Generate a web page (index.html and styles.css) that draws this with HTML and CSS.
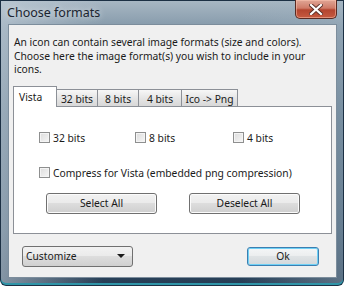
FILE: index.html
```html
<!DOCTYPE html>
<html lang="en">
<head>
    <meta charset="UTF-8">
    <meta name="viewport" content="width=device-width, initial-scale=1.0">
    <title>Choose formats</title>
    <link rel="stylesheet" href="styles.css">
</head>
<body>

    <div class="window">
        <!-- Title bar -->
        <div class="title-bar">
            <span class="title">Choose formats</span>
            <button class="close-btn" aria-label="Close">
                <svg width="14" height="11" viewBox="0 0 14 11">
                    <path d="M2 1 L12 10 M12 1 L2 10" stroke="#5a3028" stroke-width="4" stroke-linecap="square"/>
                    <path d="M2 1 L12 10 M12 1 L2 10" stroke="#ffffff" stroke-width="2.2" stroke-linecap="square"/>
                </svg>
            </button>
        </div>

        <div class="client">
            <p class="intro">An icon can contain several image formats (size and colors). Choose here the image format(s) you wish to include in your icons.</p>

            <!-- Tabs -->
            <div class="tabs">
                <div class="tab active">Vista</div>
                <div class="tab">32 bits</div>
                <div class="tab">8 bits</div>
                <div class="tab wide">4 bits</div>
                <div class="tab widest">Ico -&gt; Png</div>
            </div>

            <div class="tab-panel">
                <div class="check-row">
                    <label class="check col-1"><span class="box"></span>32 bits</label>
                    <label class="check col-2"><span class="box"></span>8 bits</label>
                    <label class="check"><span class="box"></span>4 bits</label>
                </div>
                <div class="check-row second">
                    <label class="check"><span class="box"></span>Compress for Vista (embedded png compression)</label>
                </div>
                <div class="panel-buttons">
                    <button class="btn">Select All</button>
                    <button class="btn">Deselect All</button>
                </div>
            </div>

            <!-- Bottom row -->
            <div class="footer">
                <div class="combo">
                    <span>Customize</span>
                    <span class="arrow"></span>
                </div>
                <button class="btn ok">Ok</button>
            </div>
        </div>
    </div>

</body>
</html>
```

FILE: styles.css
```css
/* General Styling */
body {
    margin: 0;
    background: #ffffff;
    font-family: 'Noto Sans', 'Open Sans', sans-serif;
    font-size: 10.3px;
    color: #1a1a1a;
}

/* Window frame */
.window {
    width: 344px;
    height: 286px;
    box-sizing: border-box;
    padding: 0 7px 8px 8px;
    border-radius: 0 0 6px 6px;
    background:
        linear-gradient(to right, rgba(196, 208, 218, 0.6), rgba(60, 90, 112, 0) 30%, rgba(60, 90, 112, 0) 70%, rgba(160, 178, 192, 0.45)),
        linear-gradient(to bottom, #a9b8c4 0%, #8398a9 10%, #5a7489 40%, #3b566e 80%, #243c54 100%);
    box-shadow: inset 0 0 0 1px #1c3044, inset 0 -2px 0 1px #2f95a8;
}

.title-bar {
    height: 24px;
    display: flex;
    justify-content: space-between;
    align-items: flex-start;
}

.title {
    margin-top: 4px;
    margin-left: -1px;
    font-size: 12.5px;
    color: #1b2530;
    text-shadow: 0 0 6px rgba(255, 255, 255, 0.8);
}

.close-btn {
    width: 42px;
    height: 19px;
    padding: 0;
    border: 1px solid #5a2a22;
    border-top: none;
    border-radius: 0 0 5px 5px;
    background: linear-gradient(to bottom, #e0a696 0%, #cf7b68 45%, #b4452f 55%, #c65a40 100%);
    box-shadow: inset 0 0 0 1px rgba(255, 200, 180, 0.5);
    display: flex;
    justify-content: center;
    align-items: center;
}

/* Client area */
.client {
    height: 254px;
    box-sizing: border-box;
    background: #f0f0f0;
    border: 1px solid #7c8d9c;
    padding: 0 4px 0 4px;
    display: flex;
    flex-direction: column;
}

.intro {
    margin: 11px 0 0 1px;
    line-height: 13.5px;
    width: 310px;
}

/* Tabs */
.tabs {
    display: flex;
    align-items: flex-end;
    margin-top: 9px;
    height: 20px;
    position: relative;
    z-index: 1;
}

.tab {
    width: 42px;
    height: 17px;
    box-sizing: border-box;
    padding: 2px 0 0 0;
    text-align: center;
    border: 1px solid #8c9097;
    border-bottom: none;
    margin-right: -1px;
    background: linear-gradient(to bottom, #f7f7f7, #e4e4e4 55%, #d8d8d8);
}

.tab.wide {
    width: 44px;
}

.tab.widest {
    width: 57px;
}

.tab.active {
    width: 44px;
    height: 21px;
    margin-bottom: -1px;
    padding: 3px 6px 0 5px;
    text-align: left;
    background: #ffffff;
}

.tab-panel {
    height: 128px;
    box-sizing: border-box;
    background: #ffffff;
    border: 1px solid #8c9097;
    padding: 24px 0 0 25px;
}

.check-row {
    display: flex;
}

.check-row.second {
    margin-top: 21px;
}

.check {
    display: flex;
    align-items: center;
    gap: 3px;
}

.col-1 {
    width: 96px;
}

.col-2 {
    width: 98px;
}

.box {
    width: 11px;
    height: 11px;
    box-sizing: border-box;
    border: 1px solid #8e8f8f;
    background: linear-gradient(135deg, #dcdcdc, #f6f6f6);
    box-shadow: inset 0 0 0 1px #f4f4f4;
}

.panel-buttons {
    display: flex;
    gap: 32px;
    margin: 13px 0 0 7px;
}

/* Buttons */
.btn {
    width: 111px;
    height: 21px;
    padding: 0;
    font-family: inherit;
    font-size: 10.3px;
    color: #1a1a1a;
    border: 1px solid #707070;
    border-radius: 3px;
    background: linear-gradient(to bottom, #f2f2f2 0%, #ebebeb 45%, #dddddd 50%, #cfcfcf 100%);
    box-shadow: inset 0 0 0 1px #fbfbfb;
}

/* Footer */
.footer {
    display: flex;
    justify-content: space-between;
    align-items: center;
    margin-top: 12px;
    padding: 0 13px 0 9px;
}

.combo {
    width: 111px;
    height: 21px;
    box-sizing: border-box;
    display: flex;
    justify-content: space-between;
    align-items: center;
    padding: 0 7px 0 3px;
    border: 1px solid #707070;
    border-radius: 3px;
    background: linear-gradient(to bottom, #f2f2f2 0%, #ebebeb 45%, #dddddd 50%, #cfcfcf 100%);
}

.arrow {
    width: 0;
    height: 0;
    border-left: 4px solid transparent;
    border-right: 4px solid transparent;
    border-top: 4px solid #1a1a1a;
}

.btn.ok {
    width: 72px;
    height: 19px;
    border-color: #3c7fb1;
    box-shadow: inset 0 0 0 1px #6fd0f5;
    background: linear-gradient(to bottom, #f4f6f7 0%, #eceeef 45%, #dfe3e5 50%, #d3d8db 100%);
}
```
